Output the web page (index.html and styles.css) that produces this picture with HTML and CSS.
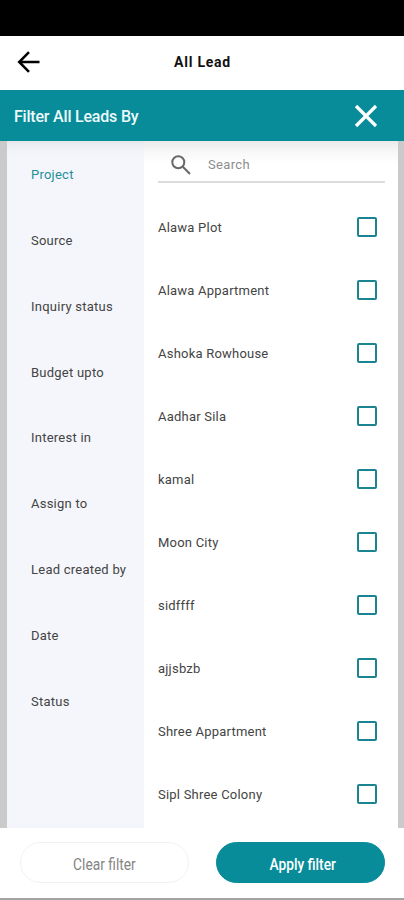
FILE: index.html
```html
<!DOCTYPE html>
<html lang="en">
<head>
<meta charset="utf-8">
<title>All Lead</title>
<link rel="stylesheet" href="styles.css">
</head>
<body>
<div class="screen">
  <div class="statusbar"></div>
  <header class="topbar">
    <svg class="back" viewBox="0 0 24 24"><path d="M22.5 12H2.5M12 2.2L2.2 12L12 21.8"/></svg>
    <h1 class="title">All Lead</h1>
  </header>
  <div class="filterbar">
    <h2 class="filter-title">Filter All Leads By</h2>
    <svg class="close" viewBox="0 0 24 24"><path d="M2 2L22 22M22 2L2 22"/></svg>
  </div>
  <main class="panel">
    <nav class="side">
      <a class="tab active">Project</a>
      <a class="tab">Source</a>
      <a class="tab">Inquiry status</a>
      <a class="tab">Budget upto</a>
      <a class="tab">Interest in</a>
      <a class="tab">Assign to</a>
      <a class="tab">Lead created by</a>
      <a class="tab">Date</a>
      <a class="tab">Status</a>
    </nav>
    <section class="content">
      <div class="search">
        <svg class="glass" viewBox="0 0 20 20"><circle cx="7.3" cy="7.3" r="6"/><path d="M11.8 11.8L19 19"/></svg>
        <span>Search</span>
      </div>
      <div class="row"><span>Alawa Plot</span><i class="box"></i></div>
      <div class="row"><span>Alawa Appartment</span><i class="box"></i></div>
      <div class="row"><span>Ashoka Rowhouse</span><i class="box"></i></div>
      <div class="row"><span>Aadhar Sila</span><i class="box"></i></div>
      <div class="row"><span>kamal</span><i class="box"></i></div>
      <div class="row"><span>Moon City</span><i class="box"></i></div>
      <div class="row"><span>sidffff</span><i class="box"></i></div>
      <div class="row"><span>ajjsbzb</span><i class="box"></i></div>
      <div class="row"><span>Shree Appartment</span><i class="box"></i></div>
      <div class="row"><span>Sipl Shree Colony</span><i class="box"></i></div>
    </section>
  </main>
  <footer class="actions">
    <button class="btn clear"><span>Clear filter</span></button>
    <button class="btn apply"><span>Apply filter</span></button>
  </footer>
</div>
</body>
</html>
```
FILE: styles.css
```css
* { box-sizing: border-box; }
body { margin: 0; background: #fff; font-family: Roboto, sans-serif; color: #444; }
.screen { width: 404px; height: 900px; display: flex; flex-direction: column; overflow: hidden; border-bottom: 2px solid #a3a3a3; }
.statusbar { height: 36px; background: #000; flex: none; }
.topbar { height: 54px; flex: none; display: grid; grid-template-columns: 40px 1fr 40px; align-items: center; padding: 0 0 2px; }
.back { width: 24px; height: 24px; margin-left: 17px; fill: none; stroke: #000; stroke-width: 2.5; }
.title { margin: 0; text-align: center; font-size: 14px; line-height: 20px; font-weight: 700; letter-spacing: .75px; color: #111; padding-left: 1px; }
.filterbar { height: 51px; flex: none; background: #088c9a; display: flex; align-items: center; justify-content: space-between; padding: 0 26px 0 14px; }
.filter-title { margin: 0; color: #eefbfc; font-size: 16px; font-weight: 500; line-height: 22px; letter-spacing: -.2px; padding-top: 2px; }
.close { width: 24px; height: 24px; fill: none; stroke: #fff; stroke-width: 3.2; }
.panel { height: 687px; flex: none; display: flex; border: solid #cacaca; border-width: 0 6px 0 7px; background: linear-gradient(#eaeaea 0, #f7f7f7 10px, #fff 22px); }
.side { width: 137px; padding-top: .6px; background: linear-gradient(#e5e8ec 0, #f1f3f7 9px, #f4f6fb 20px); }
.tab { display: flex; align-items: center; height: 65.85px; padding-left: 24px; font-size: 13px; letter-spacing: .24px; white-space: nowrap; }
.tab.active { color: #248f9a; }
.content { flex: 1; padding: 0 13px 0 14px; }
.search { height: 42px; border-bottom: 2px solid #dcdcdc; display: flex; align-items: center; padding: 7px 0 0 13px; gap: 17px; font-size: 13px; color: #8d8d8d; letter-spacing: .35px; }
.glass { width: 20px; height: 20px; fill: none; stroke: #686868; stroke-width: 2; }
.row { height: 63px; display: flex; align-items: center; justify-content: space-between; padding-right: 8px; font-size: 13px; letter-spacing: .22px; }
.search + .row { margin-top: 13px; }
.box { width: 20px; height: 20px; margin-bottom: 2px; border: 2px solid #1b8490; border-radius: 2px; }
.actions { flex: 1; display: flex; justify-content: space-between; align-items: flex-start; padding: 14px 19px 0 20px; }
.btn { width: 169px; height: 41px; border-radius: 21px; border: 1px solid #f0f2f2; background: #fff; font: 400 16px Roboto, sans-serif; color: #858585; padding: 4px 0 0; }
.btn span { display: inline-block; transform: scaleX(.86); }
.apply { background: #088c9a; border-color: #088c9a; color: #fff; font-weight: 500; padding-left: 5px; }
```
